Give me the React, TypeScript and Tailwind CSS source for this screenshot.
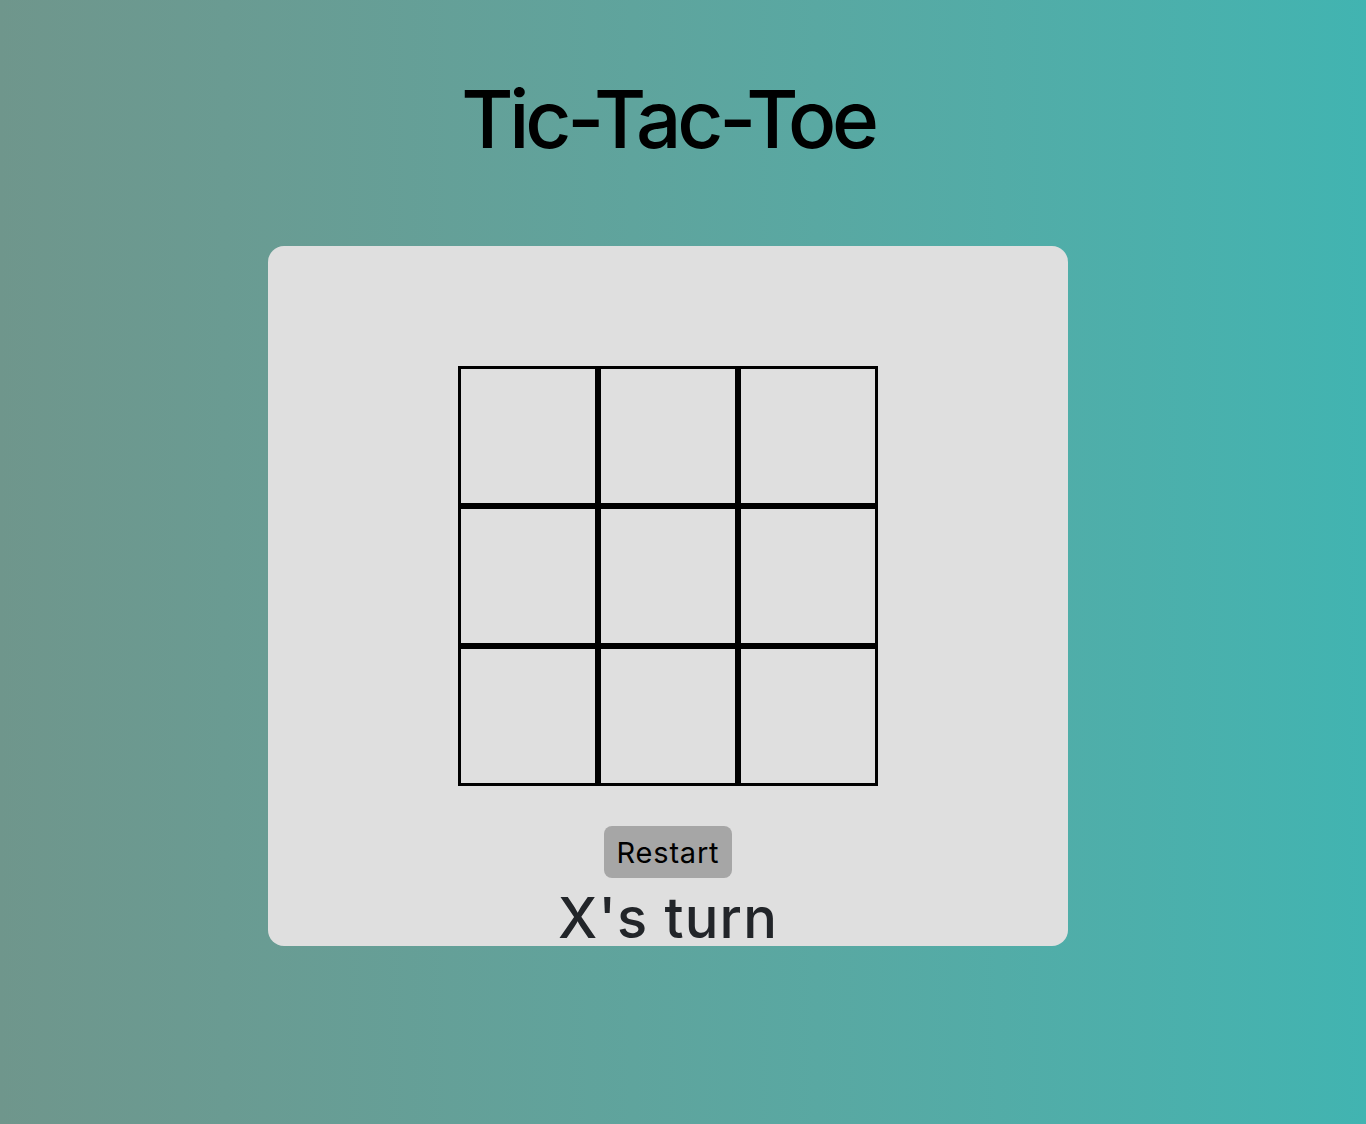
import { useState } from "react";

type Cell = "X" | "O" | null;

export default function App() {
  const [cells, setCells] = useState<Cell[]>(Array(9).fill(null));
  const [xNext, setXNext] = useState(true);

  const play = (i: number) => {
    if (cells[i]) return;
    const next = cells.slice();
    next[i] = xNext ? "X" : "O";
    setCells(next);
    setXNext(!xNext);
  };

  const restart = () => {
    setCells(Array(9).fill(null));
    setXNext(true);
  };

  return (
    <div
      className="min-h-screen w-full bg-linear-to-r from-[#6f968c] to-[#41b4b1] pr-[30px] flex flex-col items-center"
      style={{ fontFamily: "Inter, 'Noto Sans', sans-serif" }}
    >
      <h1 className="pt-[79px] mb-[87px] text-[80px] leading-none font-medium text-black tracking-[-4.2px]">
        Tic-Tac-Toe
      </h1>

      <div className="w-[800px] h-[700px] bg-[#dfdfdf] rounded-[16px] flex flex-col items-center pt-[120px]">
        <div className="grid grid-cols-3 w-[420px] h-[420px]">
          {cells.map((c, i) => (
            <button
              key={i}
              onClick={() => play(i)}
              className="w-[140px] h-[140px] border-[3px] border-black flex items-center justify-center text-[72px] font-medium text-[#222529]"
            >
              {c}
            </button>
          ))}
        </div>

        <button
          onClick={restart}
          className="mt-[40px] h-[52px] w-[128px] rounded-[8px] bg-[#a6a6a6] text-[29px] leading-none text-black tracking-[0.8px]"
        >
          Restart
        </button>

        <div className="mt-[12px] text-[56px] leading-none font-medium text-[#222529] tracking-[1.2px]">
          {xNext ? "X" : "O"}'s turn
        </div>
      </div>
    </div>
  );
}
